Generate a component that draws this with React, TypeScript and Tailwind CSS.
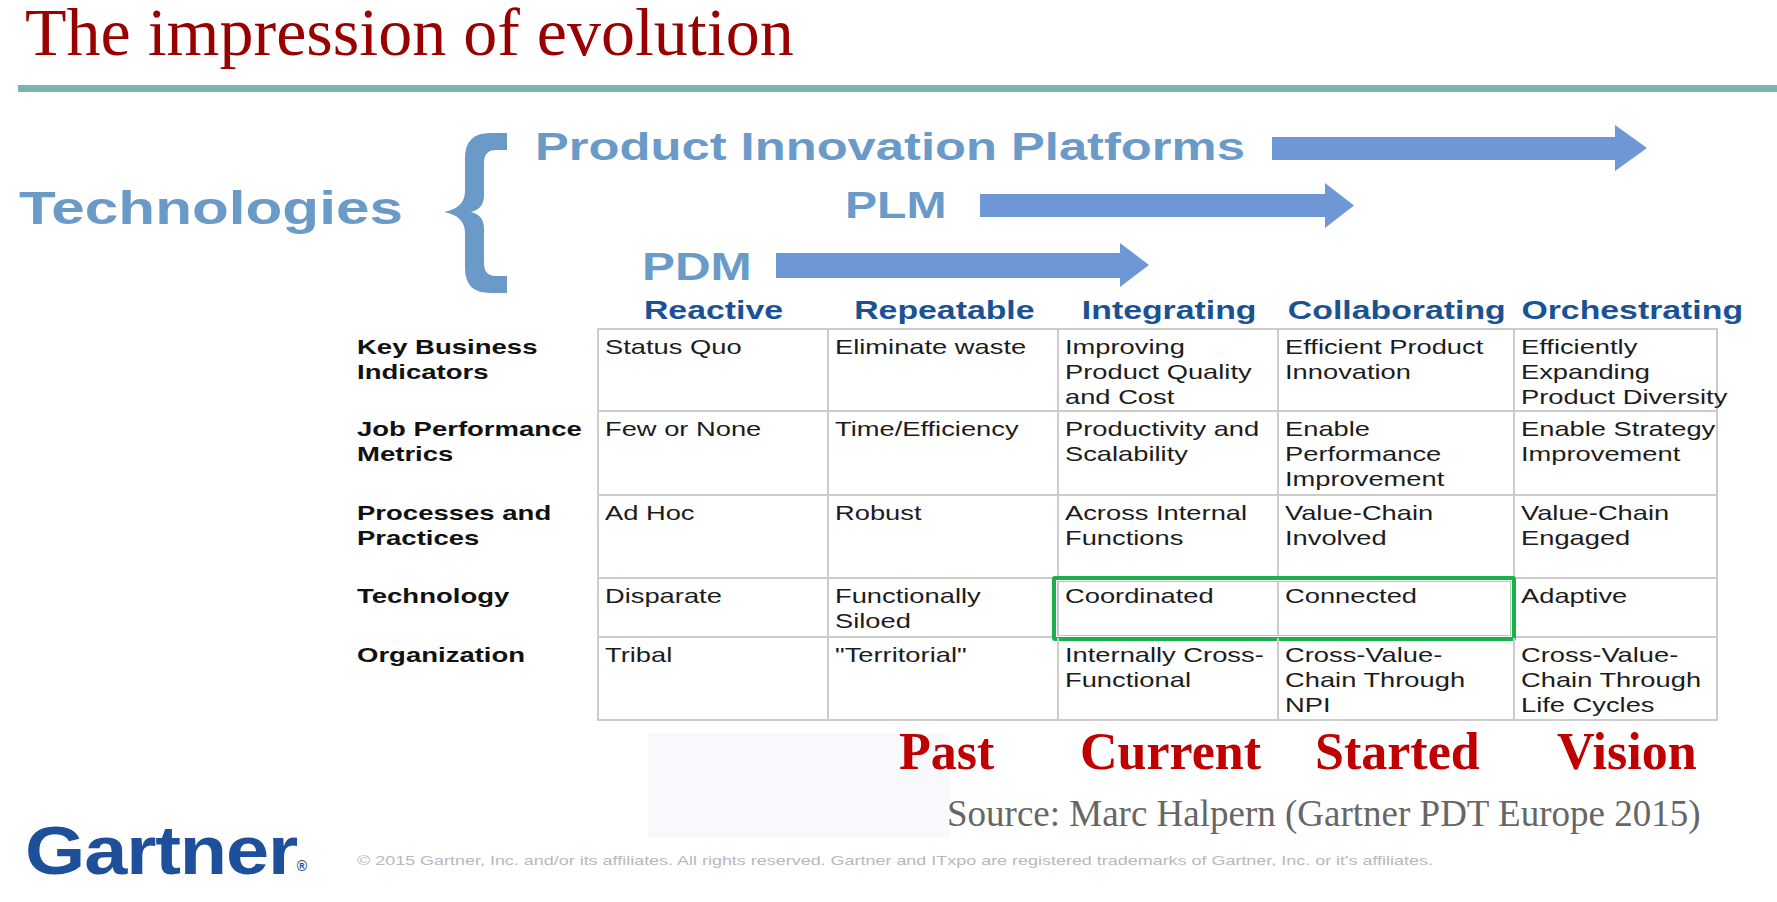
import React from "react";

type Row = { label: string[]; h: string; cells: string[][] };

const rows: Row[] = [
  {
    label: ["Key Business", "Indicators"],
    h: "h-[84px]",
    cells: [
      ["Status Quo"],
      ["Eliminate waste"],
      ["Improving", "Product Quality", "and Cost"],
      ["Efficient Product", "Innovation"],
      ["Efficiently", "Expanding", "Product Diversity"],
    ],
  },
  {
    label: ["Job Performance", "Metrics"],
    h: "h-[84px]",
    cells: [
      ["Few or None"],
      ["Time/Efficiency"],
      ["Productivity and", "Scalability"],
      ["Enable", "Performance", "Improvement"],
      ["Enable Strategy", "Improvement"],
    ],
  },
  {
    label: ["Processes and", "Practices"],
    h: "h-[83px]",
    cells: [
      ["Ad Hoc"],
      ["Robust"],
      ["Across Internal", "Functions"],
      ["Value-Chain", "Involved"],
      ["Value-Chain", "Engaged"],
    ],
  },
  {
    label: ["Technology"],
    h: "h-[59px]",
    cells: [["Disparate"], ["Functionally", "Siloed"], ["Coordinated"], ["Connected"], ["Adaptive"]],
  },
  {
    label: ["Organization"],
    h: "h-[83px]",
    cells: [
      ["Tribal"],
      ['"Territorial"'],
      ["Internally Cross-", "Functional"],
      ["Cross-Value-", "Chain Through", "NPI"],
      ["Cross-Value-", "Chain Through", "Life Cycles"],
    ],
  },
];

const cellWidths = ["w-[232px]", "w-[230px]", "w-[220px]", "w-[236px]", "w-[203px]"];

const headers: { t: string; w: string }[] = [
  { t: "Reactive", w: "w-[232px]" },
  { t: "Repeatable", w: "w-[230px]" },
  { t: "Integrating", w: "w-[220px]" },
  { t: "Collaborating", w: "w-[236px]" },
  { t: "Orchestrating", w: "w-[234px]" },
];

function Arrow({ w, h, top, bottom, head }: { w: number; h: number; top: number; bottom: number; head: number }) {
  const pts = `0,${top} ${head},${top} ${head},0 ${w},${h / 2} ${head},${h} ${head},${bottom} 0,${bottom}`;
  return (
    <svg width={w} height={h} viewBox={`0 0 ${w} ${h}`} className="shrink-0 block">
      <polygon points={pts} fill="#6e97d5" />
    </svg>
  );
}

export default function App() {
  return (
    <div className="w-[1777px] h-[902px] bg-white overflow-hidden font-['Liberation_Sans',Arial,sans-serif]">
      {/* Title */}
      <div className="pl-[25px] h-[64px] leading-[64px] text-[68px] text-[#990000] font-['Liberation_Serif',serif] whitespace-nowrap">
        The impression of evolution
      </div>
      <div className="ml-[18px] mt-[21px] h-[7px] bg-[#79b5ad]" />

      {/* Diagram */}
      <div className="flex items-start">
        <div className="w-[444px] shrink-0 pl-[19px] pt-[93px]">
          <div className="origin-left scale-x-[1.31] text-[46px] leading-none font-bold text-[#6a9bc8] whitespace-nowrap">
            Technologies
          </div>
        </div>
        <svg width="63" height="160" viewBox="0 0 63 160" className="mt-[41px] shrink-0 block">
          <path
            d="M46,0 L63,0 L63,17 L52,17 Q40,17 40,30 L40,62 Q40,76 27,79 Q40,82 40,96 L40,130 Q40,143 52,143 L63,143 L63,160 L46,160 Q21,160 21,135 L21,100 Q21,83 0,79 Q21,75 21,58 L21,25 Q21,0 46,0 Z"
            fill="#6a9bc8"
          />
        </svg>
        <div className="ml-[28px] pt-[33px] flex flex-col">
          <div className="flex items-start">
            <div className="w-[737px] shrink-0 mt-[2px]">
              <div className="origin-left scale-x-[1.3] text-[39px] leading-none font-bold text-[#6a9bc8] whitespace-nowrap">
                Product Innovation Platforms
              </div>
            </div>
            <Arrow w={375} h={46} top={12} bottom={35} head={343} />
          </div>
          <div className="flex items-start mt-[12px] ml-[310px]">
            <div className="w-[135px] shrink-0 mt-[4px]">
              <div className="origin-left scale-x-[1.3] text-[37px] leading-none font-bold text-[#6a9bc8] whitespace-nowrap">
                PLM
              </div>
            </div>
            <Arrow w={374} h={45} top={11} bottom={34} head={345} />
          </div>
          <div className="flex items-start mt-[15px] ml-[107px]">
            <div className="w-[134px] shrink-0 mt-[5px]">
              <div className="origin-left scale-x-[1.3] text-[38px] leading-none font-bold text-[#6a9bc8] whitespace-nowrap">
                PDM
              </div>
            </div>
            <Arrow w={373} h={44} top={10} bottom={35} head={344} />
          </div>
        </div>
      </div>

      {/* Column headers */}
      <div className="flex mt-[4px] pl-[597px] h-[26px]">
        {headers.map((h) => (
          <div key={h.t} className={h.w + " shrink-0 flex justify-center"}>
            <div className="scale-x-[1.3] text-[26px] leading-none font-bold text-[#1b5294] whitespace-nowrap">{h.t}</div>
          </div>
        ))}
      </div>

      {/* Table */}
      <div className="mt-[5px] ml-[357px] flex flex-col">
        {rows.map((r, ri) => (
          <div key={ri} className={"relative flex " + r.h}>
            <div className={"w-[240px] shrink-0 " + (ri === 0 ? "pt-[6px]" : "pt-[4px]")}>
              {r.label.map((l) => (
                <div key={l} className="origin-left scale-x-[1.31] text-[21px] leading-[25px] font-bold text-[#111111] whitespace-nowrap">
                  {l}
                </div>
              ))}
            </div>
            {r.cells.map((c, ci) => (
              <div
                key={ci}
                className={
                  cellWidths[ci] +
                  " shrink-0 border-r-2 border-b-2 border-[#cccccc] pl-[6px] pt-[4px] " +
                  (ci === 0 ? "border-l-2 " : "") +
                  (ri === 0 ? "border-t-2" : "")
                }
              >
                {c.map((l) => (
                  <div key={l} className="origin-left scale-x-[1.3] text-[21px] leading-[25px] text-[#1c1c1c] whitespace-nowrap">
                    {l}
                  </div>
                ))}
              </div>
            ))}
            {ri === 3 && (
              <div className="absolute left-[695px] top-[-3px] w-[464px] h-[65px] border-4 border-[#1bb04b] rounded-[3px] shadow-[inset_0_0_0_1px_#ffffff,inset_0_0_0_2px_#9ad8ab]" />
            )}
          </div>
        ))}
      </div>

      {/* Bottom */}
      <div className="flex">
        <div className="w-[357px] shrink-0 pl-[25px] pt-[95px]">
          <div className="flex items-end text-[#1d4f9b]">
            <div className="origin-left scale-x-[1.14] text-[68px] leading-none font-bold tracking-[-1px] whitespace-nowrap">
              Gartner
            </div>
            <div className="ml-[33px] mb-[11px] text-[14px] leading-none font-bold">®</div>
          </div>
        </div>
        <div className="relative flex flex-col">
          <div className="absolute left-[291px] top-[12px] w-[302px] h-[104px] bg-[#f8f9fd]" />
          <div className="relative flex mt-[5px] pl-[542px] font-['Liberation_Serif',serif] font-bold text-[52px] leading-none text-[#c00000]">
            <div className="w-[181px] shrink-0">Past</div>
            <div className="w-[235px] shrink-0">Current</div>
            <div className="w-[242px] shrink-0">Started</div>
            <div className="shrink-0">Vision</div>
          </div>
          <div className="relative mt-[17px] pl-[590px] font-['Liberation_Serif',serif] text-[37px] leading-none text-[#666666] whitespace-nowrap">
            Source: Marc Halpern (Gartner PDT Europe 2015)
          </div>
          <div className="relative mt-[22px] origin-left scale-x-[1.38] text-[13px] leading-none text-[#b8b8b8] whitespace-nowrap">
            © 2015 Gartner, Inc. and/or its affiliates. All rights reserved. Gartner and ITxpo are registered trademarks of Gartner, Inc. or it's affiliates.
          </div>
        </div>
      </div>
    </div>
  );
}
